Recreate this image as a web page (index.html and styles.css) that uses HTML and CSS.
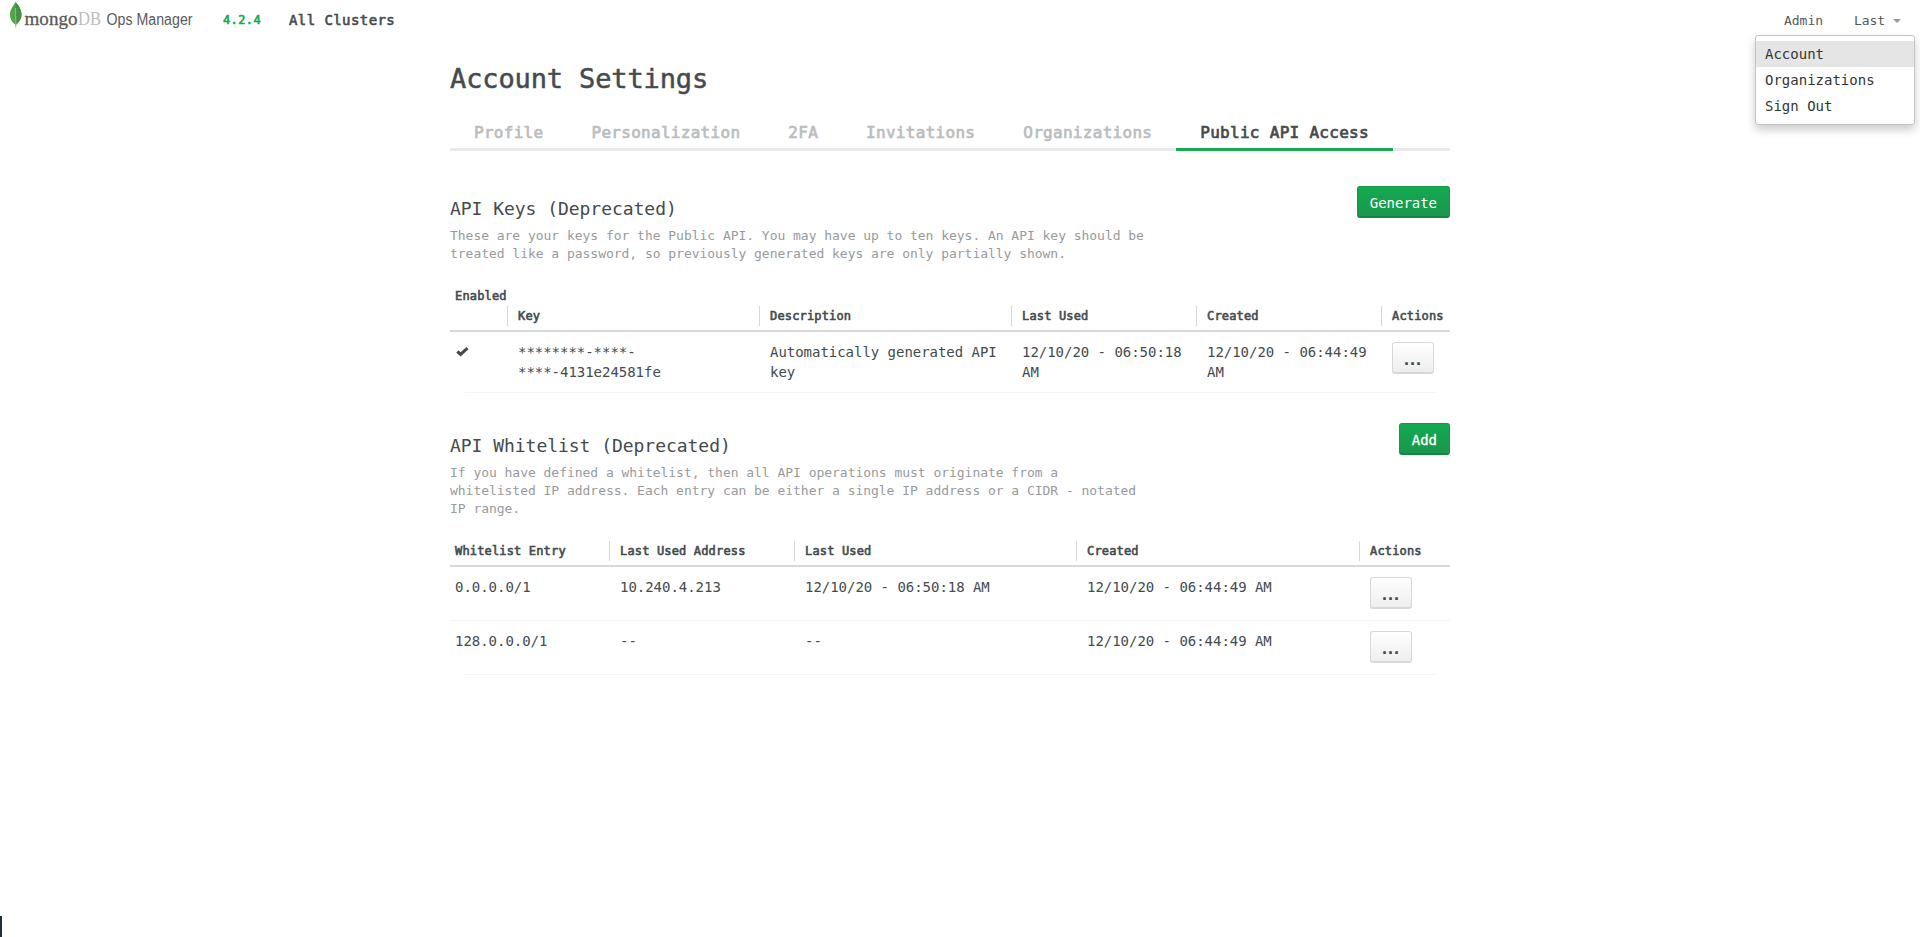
FILE: index.html
```html
<!DOCTYPE html>
<html lang="en">
<head>
<meta charset="utf-8">
<title>Account Settings</title>
<link rel="stylesheet" href="styles.css">
</head>
<body>
<header class="topbar">
  <svg class="logo" width="216" height="40" viewBox="0 0 216 40">
    <path d="M15.500 2C18 5 21.500 9 21.500 14.500C21.500 19.500 18.500 22.500 16.200 24.500L15.800 28L15.200 24.500C12.500 22.500 10 19.500 10 14.500C10 9 13.500 6 15.500 2Z" fill="#4fa547"/>
    <path d="M15.500 2C18 5 21.500 9 21.500 14.500C21.500 19.500 18.500 22.500 16.200 24.500Z" fill="#3f9143"/>
    <path d="M15.600 8L15.900 28" stroke="#b9c9a5" stroke-width=".7"/>
    <text class="logo-serif dark" x="24.500" y="24.500" font-size="19.500" textLength="53" lengthAdjust="spacingAndGlyphs">mongo</text>
    <text class="logo-serif" x="78" y="24.500" font-size="18" textLength="23" lengthAdjust="spacingAndGlyphs" fill="#bcbcbc">DB</text>
    <text class="logo-sans" x="106.500" y="24.500" font-size="16" textLength="86" lengthAdjust="spacingAndGlyphs" fill="#5b5b5b">Ops Manager</text>
  </svg>
  <span class="version">4.2.4</span>
  <span class="clusters">All Clusters</span>
  <nav class="usernav">
    <span>Admin</span>
    <span class="user">Last <i class="caret"></i></span>
  </nav>
  <ul class="menu">
    <li class="current">Account</li>
    <li>Organizations</li>
    <li>Sign Out</li>
  </ul>
</header>
<main class="page">
  <h1>Account Settings</h1>
  <nav class="tabs">
    <span>Profile</span><span>Personalization</span><span>2FA</span><span>Invitations</span><span>Organizations</span><span class="active">Public API Access</span>
  </nav>
  <section class="keys">
    <div class="intro">
      <div>
        <h2>API Keys (Deprecated)</h2>
        <p>These are your keys for the Public API. You may have up to ten keys. An API key should be<br>treated like a password, so previously generated keys are only partially shown.</p>
      </div>
      <button class="primary">Generate</button>
    </div>
    <div class="row head">
      <div class="tall">Enabled</div><div>Key</div><div>Description</div><div>Last Used</div><div>Created</div><div>Actions</div>
    </div>
    <div class="row last">
      <div><svg class="check" width="13" height="10" viewBox="0 0 13 10"><path d="M1.300 4.500L4.600 7.500L11.500 1.200" fill="none" stroke="#444a4e" stroke-width="3.100"/></svg></div>
      <div>********-****-<br>****-4131e24581fe</div>
      <div>Automatically generated API<br>key</div>
      <div>12/10/20 - 06:50:18<br>AM</div>
      <div>12/10/20 - 06:44:49<br>AM</div>
      <div><button class="more">...</button></div>
    </div>
  </section>
  <section class="whitelist">
    <div class="intro">
      <div>
        <h2>API Whitelist (Deprecated)</h2>
        <p>If you have defined a whitelist, then all API operations must originate from a<br>whitelisted IP address. Each entry can be either a single IP address or a CIDR - notated<br>IP range.</p>
      </div>
      <button class="primary strong">Add</button>
    </div>
    <div class="row head">
      <div>Whitelist Entry</div><div>Last Used Address</div><div>Last Used</div><div>Created</div><div>Actions</div>
    </div>
    <div class="row">
      <div>0.0.0.0/1</div><div>10.240.4.213</div><div>12/10/20 - 06:50:18 AM</div><div>12/10/20 - 06:44:49 AM</div><div><button class="more">...</button></div>
    </div>
    <div class="row last">
      <div>128.0.0.0/1</div><div>--</div><div>--</div><div>12/10/20 - 06:44:49 AM</div><div><button class="more">...</button></div>
    </div>
  </section>
</main>
<div class="edge"></div>
</body>
</html>
```
FILE: styles.css
```css
* { box-sizing: border-box; }
body {
  margin: 0;
  height: 937px;
  overflow: hidden;
  position: relative;
  background: #fff;
  color: #444a4e;
  font: 14px/20px "DejaVu Sans Mono", monospace;
  letter-spacing: -0.03px;
  white-space: nowrap;
}
h1, h2, p, ul { margin: 0; padding: 0; font-weight: normal; }
button { font: inherit; letter-spacing: inherit; margin: 0; }

.topbar { position: relative; height: 40px; display: flex; line-height: 41px; }
.logo { display: block; overflow: visible; }
.logo-serif { font-family: "Liberation Serif", serif; letter-spacing: 0; }
.dark { fill: #5b5957; stroke: #5b5957; stroke-width: .3px; }
.logo-sans { font-family: "Liberation Sans", sans-serif; letter-spacing: 0; }
.version { margin-left: 7px; width: 66px; font-size: 12px; letter-spacing: .4px; color: #13aa52; -webkit-text-stroke: .6px; }
.clusters { font-size: 14px; letter-spacing: .42px; -webkit-text-stroke: .6px; }
.usernav { display: flex; margin-left: auto; width: 136px; font-size: 13px; color: #55595d; }
.usernav .user { display: flex; align-items: center; margin-left: 31px; }
.caret { margin-left: 8px; border: 4px solid transparent; border-top-color: #999; border-bottom: 0; margin-top: 1px; }
.menu {
  position: absolute;
  top: 35px;
  right: 5px;
  width: 160px;
  height: 90px;
  padding: 5px 0;
  list-style: none;
  background: #fff;
  border: 1px solid #c3c3c3;
  border-radius: 3px;
  box-shadow: 0 5px 10px rgba(0, 0, 0, .2);
  color: #313538;
}
.menu li { height: 26px; line-height: 26px; padding-left: 9px; letter-spacing: 0; }
.menu .current { background: #e5e5e5; }

.page { width: 1000px; margin-left: 450px; }
h1 { height: 72px; padding-top: 19px; font-size: 27px; line-height: 40px; letter-spacing: -.13px; -webkit-text-stroke: .5px; }
.tabs { display: flex; height: 39px; border-bottom: 3px solid #e7eae9; font-size: 16px; line-height: 42px; letter-spacing: .29px; color: #babdbe; -webkit-text-stroke: .7px; }
.tabs span { height: 39px; padding: 0 24px; }
.tabs .active { color: #444a4e; border-bottom: 3px solid #13aa52; }

.intro { display: flex; justify-content: space-between; align-items: flex-start; }
.keys .intro { height: 135px; padding-top: 35px; }
.whitelist .intro { height: 142px; padding-top: 30px; }
h2 { font-size: 18px; line-height: 30px; margin-top: 8px; letter-spacing: -.04px; }
p { font-size: 13px; line-height: 18px; margin-top: 3px; color: #989a9c; }
.primary {
  height: 32px;
  padding: 2px 12px 0;
  color: #fff;
  background: linear-gradient(#13aa52, #1a964b);
  border: 1px solid #18964a;
  border-bottom: 2px solid #168444;
  border-radius: 3px;
}
.strong { -webkit-text-stroke: .3px; }

.row { display: grid; position: relative; border-bottom: 1px solid #f2f3f3; }
.keys .row { grid-template-columns: 57px 252px 252px 185px 185px 69px; }
.whitelist .row { grid-template-columns: 159px 185px 282px 283px 91px; }
.row > div { padding: 10px 0 0 11px; }
.row > div:first-child { padding-left: 5px; }
.keys .row:not(.head) { height: 61px; }
.whitelist .row:not(.head) { height: 54px; }
.head { align-items: end; padding-bottom: 4px; border-bottom: 2px solid #d5dad9; font-size: 12px; letter-spacing: .16px; -webkit-text-stroke: .6px; }
.keys .head { height: 46px; }
.whitelist .head { height: 32px; }
.row.head > div { height: 20px; padding-top: 0; border-left: 1px solid #d3d8d8; padding-left: 10px; }
.row.head > div:first-child { border: 0; padding-left: 5px; }
.row.head > .tall { height: 40px; }
.last { border-bottom-color: transparent; }
.last::after { content: ""; position: absolute; left: 15px; right: 15px; bottom: -1px; height: 1px; background: #f2f3f3; }
.check { display: block; margin: 5px 0 0 1px; }
.more {
  display: block;
  width: 42px;
  height: 32px;
  padding: 3px 0 0;
  border: 1px solid #d5dad9;
  border-bottom-width: 2px;
  border-radius: 3px;
  background: linear-gradient(#fff, #eee);
  color: #444a4e;
  font: bold 18px/20px "Liberation Sans", sans-serif;
  letter-spacing: 1px;
}
.edge { position: absolute; left: 0; bottom: 0; width: 2px; height: 21px; background: #20303b; }
```
